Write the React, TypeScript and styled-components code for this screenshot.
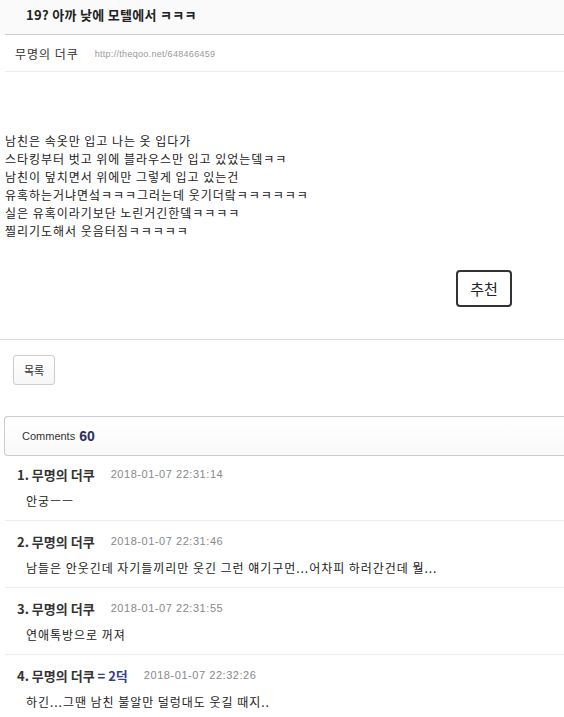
import React from 'react'
import styled, { createGlobalStyle } from 'styled-components'

const GlobalStyle = createGlobalStyle`
    body {
        margin: 0;
        background: #fff;
        font-family: "Noto Sans CJK KR", "Liberation Sans", sans-serif;
        color: #333;
        overflow: hidden;
    }
`

const Page = styled.div`
    width: 564px;
    height: 717px;
    overflow: hidden;
`

const Header = styled.div`
    background: #fafafa;
`

const TitleBar = styled.div`
    margin-left: 5px;
    height: 35px;
    box-sizing: border-box;
    padding: 0 0 6px 21px;
    border-bottom: 1px solid #ccc;
    display: flex;
    align-items: center;
    font-size: 13px;
    font-weight: 700;
    letter-spacing: 0.3px;
    color: #222;
`

const AuthorRow = styled.div`
    margin-left: 5px;
    height: 37px;
    box-sizing: border-box;
    padding: 1px 0 0 10px;
    border-bottom: 1px solid #eee;
    display: flex;
    align-items: center;
    gap: 16px;
`

const Author = styled.span`
    font-size: 12px;
    letter-spacing: 0.08em;
    color: #333;
`

const Url = styled.span`
    font-family: "Liberation Sans", sans-serif;
    font-size: 9px;
    letter-spacing: 0.3px;
    color: #999;
`

const Body = styled.div`
    padding: 60px 0 0 5px;
    font-size: 12px;
    line-height: 18px;
    letter-spacing: 0.08em;
    color: #222;
`

const ButtonRow = styled.div`
    display: flex;
    padding: 30px 0 32px 456px;
    border-bottom: 1px solid #ddd;
`

const RecommendButton = styled.button`
    width: 56px;
    height: 37px;
    border: 2px solid #333;
    border-radius: 4px;
    background: #fff;
    font-family: "Noto Sans CJK KR", sans-serif;
    font-size: 15px;
    color: #222;
    padding: 0;
`

const ListRow = styled.div`
    padding: 15px 0 0 13px;
`

const ListButton = styled.button`
    width: 42px;
    height: 30px;
    border: 1px solid #ccc;
    border-radius: 3px;
    background: linear-gradient(#fff, #f6f6f6);
    font-family: "Noto Sans CJK KR", sans-serif;
    font-size: 11px;
    color: #333;
    padding: 0;
`

const CommentsBox = styled.div`
    margin: 31px 0 0 4px;
    height: 40px;
    box-sizing: border-box;
    border: 1px solid #ccc;
    border-right: none;
    border-radius: 4px 0 0 4px;
    background: linear-gradient(#fff, #f9f9f9);
    display: flex;
    align-items: center;
    padding-left: 17px;
    gap: 4px;
    font-family: "Liberation Sans", sans-serif;
`

const CommentsLabel = styled.span`
    font-size: 11px;
    color: #333;
`

const CommentsCount = styled.span`
    font-size: 14px;
    font-weight: 700;
    color: #2b2f5a;
`

const CommentList = styled.div`
    margin-left: 5px;
`

const CommentItem = styled.div<{ $first?: boolean }>`
    padding: ${p => (p.$first ? '9px' : '11px')} 0 10px 0;
    border-bottom: 1px solid #eee;
`

const CommentHead = styled.div`
    display: flex;
    align-items: center;
    height: 18px;
    padding-left: 12px;
    gap: 16px;
`

const CommentName = styled.span`
    font-size: 13px;
    font-weight: 700;
    color: #333;
    & > em {
        font-style: normal;
        color: #34408a;
    }
`

const CommentDate = styled.span`
    font-family: "Liberation Sans", sans-serif;
    font-size: 11px;
    letter-spacing: 0.55px;
    color: #888;
`

const CommentText = styled.div`
    margin-top: 9px;
    padding-left: 21px;
    font-size: 12px;
    line-height: 18px;
    letter-spacing: 0.08em;
    color: #222;
    white-space: nowrap;
`

interface CommentProps {
    no: number
    name: string
    extra?: string
    date: string
    text: string
    first?: boolean
}

const Comment = ({ no, name, extra, date, text, first }: CommentProps) => (
    <CommentItem $first={first}>
        <CommentHead>
            <CommentName>
                {no}. {name}
                {extra && <em> {extra}</em>}
            </CommentName>
            <CommentDate>{date}</CommentDate>
        </CommentHead>
        <CommentText>{text}</CommentText>
    </CommentItem>
)

const bodyLines = [
    '남친은 속옷만 입고 나는 옷 입다가',
    '스타킹부터 벗고 위에 블라우스만 입고 있었는뎈ㅋㅋ',
    '남친이 덮치면서 위에만 그렇게 입고 있는건',
    '유혹하는거냐면섴ㅋㅋㅋ그러는데 웃기더랔ㅋㅋㅋㅋㅋㅋ',
    '실은 유혹이라기보단 노린거긴한뎈ㅋㅋㅋㅋ',
    '찔리기도해서 웃음터짐ㅋㅋㅋㅋㅋ',
]

const comments: CommentProps[] = [
    { no: 1, name: '무명의 더쿠', date: '2018-01-07 22:31:14', text: '안궁ㅡㅡ' },
    {
        no: 2,
        name: '무명의 더쿠',
        date: '2018-01-07 22:31:46',
        text: '남들은 안웃긴데 자기들끼리만 웃긴 그런 얘기구먼...어차피 하러간건데 뭘...',
    },
    { no: 3, name: '무명의 더쿠', date: '2018-01-07 22:31:55', text: '연애톡방으로 꺼져' },
    {
        no: 4,
        name: '무명의 더쿠',
        extra: '= 2덕',
        date: '2018-01-07 22:32:26',
        text: '하긴...그땐 남친 불알만 덜렁대도 웃길 때지..',
    },
]

export default function App() {
    return (
        <Page>
            <GlobalStyle />
            <Header>
                <TitleBar>19? 아까 낮에 모텔에서 ㅋㅋㅋ</TitleBar>
            </Header>
            <AuthorRow>
                <Author>무명의 더쿠</Author>
                <Url>http://theqoo.net/648466459</Url>
            </AuthorRow>
            <Body>
                {bodyLines.map(line => (
                    <div key={line}>{line}</div>
                ))}
            </Body>
            <ButtonRow>
                <RecommendButton>추천</RecommendButton>
            </ButtonRow>
            <ListRow>
                <ListButton>목록</ListButton>
            </ListRow>
            <CommentsBox>
                <CommentsLabel>Comments</CommentsLabel>
                <CommentsCount>60</CommentsCount>
            </CommentsBox>
            <CommentList>
                {comments.map((c, i) => (
                    <Comment key={c.no} {...c} first={i === 0} />
                ))}
            </CommentList>
        </Page>
    )
}
